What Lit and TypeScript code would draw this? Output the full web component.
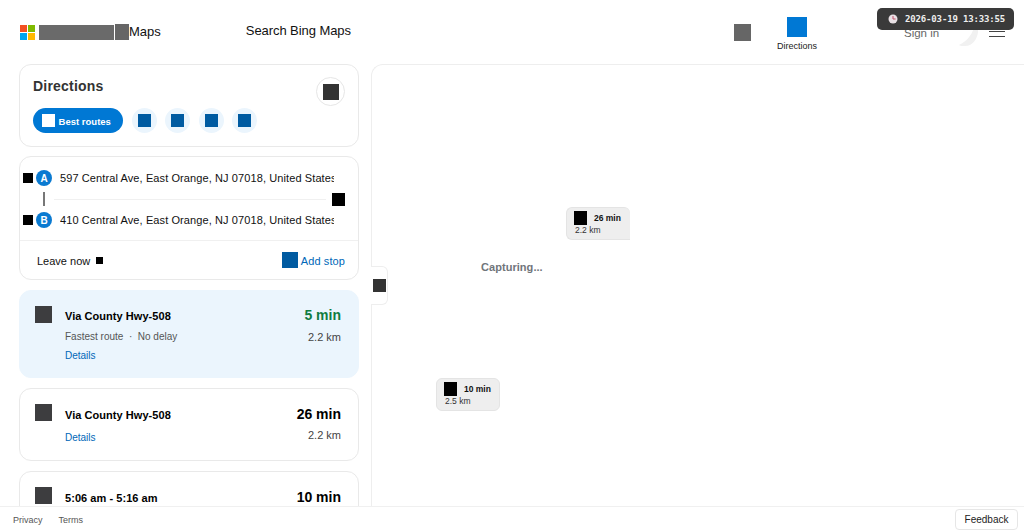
import { LitElement, html, css } from "lit";
import { customElement } from "lit/decorators.js";

@customElement("app-root")
export class AppRoot extends LitElement {
  static styles = css`
    :host { display: block; width: 1024px; height: 532px; position: relative; overflow: hidden; background: #fff; font-family: "Liberation Sans", Arial, sans-serif; color: #111; }
    * { box-sizing: border-box; }
    .page { display: grid; grid-template-rows: 64px 1fr 26px; height: 532px; }
    header { display: flex; align-items: flex-start; position: relative; }
    .logo { display: flex; align-items: center; margin: 24px 0 0 20px; }
    .ms { display: grid; grid-template-columns: 7px 7px; grid-auto-rows: 7px; gap: 1px; margin: 0 4px 0 0; }
    .ms i:nth-child(1) { background: #f25022; } .ms i:nth-child(2) { background: #7fba00; }
    .ms i:nth-child(3) { background: #00a4ef; } .ms i:nth-child(4) { background: #ffb900; }
    .bing { width: 75px; height: 15px; background: #6a6a6a; }
    .bing2 { width: 14px; height: 16px; background: #666; margin-left: 1px; }
    .mapsword { font-size: 13px; line-height: 16px; }
    .search { font-size: 13px; line-height: 16px; margin: 23px 0 0 85px; letter-spacing: -.07px; }
    .hright { margin-left: auto; display: flex; align-items: flex-start; }
    .hgrey { width: 17px; height: 17px; background: #666; margin: 24px 0 0 0; }
    .dirbtn { display: flex; flex-direction: column; align-items: center; margin: 17px 0 0 16px; font-size: 9px; line-height: 11px; color: #222; width: 60px; }
    .dirbtn i { width: 20px; height: 20px; background: #0078d4; margin-bottom: 4px; }
    .signin { font-size: 11.5px; line-height: 14px; color: #666; margin: 26px 0 0 77px; width: 34px; white-space: nowrap; }
    .swoosh { margin: 28px 0 0 21px; }
    .burger { width: 16px; margin: 26px 19px 0 11px; display: flex; flex-direction: column; gap: 4px; }
    .burger i { height: 1px; background: #444; }
    .stamp { position: absolute; left: 877px; top: 8px; width: 137px; height: 22px; background: #3a3a3a; border-radius: 5px; display: flex; align-items: center; gap: 7px; padding-left: 11px; color: #eee; font: bold 9px "DejaVu Sans Mono", monospace; letter-spacing: -.15px; }
    main { display: grid; grid-template-columns: 371px 1fr; min-height: 0; }
    aside { padding-left: 19px; width: 371px; overflow: hidden; display: flex; flex-direction: column; }
    .card { width: 340px; border: 1px solid #e9e9e9; border-radius: 12px; flex: none; }
    .dir { height: 83px; padding: 13px 13px; position: relative; margin-bottom: 9px; }
    .dir h2 { margin: 0; font-size: 14px; line-height: 16px; color: #333; letter-spacing: .2px; }
    .chips { display: flex; gap: 8.6px; margin-top: 14px; }
    .chip0 { display: flex; align-items: center; width: 90.4px; height: 25px; border-radius: 13px; background: #0078d4; color: #fff; font-size: 9.5px; font-weight: bold; padding-left: 9px; gap: 4px; margin-left: -.4px; }
    .chip0 i { width: 13px; height: 13px; background: #fff; }
    .chip0 span { margin-top: 1px; }
    .chip { width: 25px; height: 25px; border-radius: 50%; background: #ebf5fd; display: flex; align-items: center; justify-content: center; }
    .chip i { width: 13px; height: 13px; background: #005ba1; }
    .close { position: absolute; right: 13px; top: 12px; width: 29px; height: 29px; border-radius: 50%; border: 1px solid #e6e6e6; display: flex; align-items: center; justify-content: center; }
    .close i { width: 16px; height: 16px; background: #333; }
    .addr { height: 124px; margin-bottom: 10px; display: flex; flex-direction: column; }
    .stops { height: 84px; border-bottom: 1px solid #f0f0f0; position: relative; padding: 12px 0 0 3px; }
    .stop { display: flex; align-items: center; height: 18px; }
    .stop b.sq { width: 10px; height: 10px; background: #000; }
    .pin { width: 16px; height: 16px; border-radius: 50%; background: #0a7ad1; color: #fff; font-size: 10px; font-weight: bold; display: flex; align-items: center; justify-content: center; margin: 0 8px 0 3px; }
    .stop span { font-size: 11px; letter-spacing: .1px; width: 274px; overflow: hidden; white-space: nowrap; color: #111; }
    .mid { display: flex; align-items: center; height: 24px; margin: 0; }
    .vline { width: 1.5px; height: 14px; background: #777; margin-left: 20px; }
    .hline { width: 272px; height: 1px; background: #f0f0f0; margin-left: 9.5px; }
    .mid b { width: 13px; height: 13px; background: #000; margin-left: 6px; }
    .leave { display: flex; align-items: center; flex: 1; padding: 1px 13px 0 17px; font-size: 11px; }
    .leave b { width: 7px; height: 7px; background: #000; margin-left: 6px; margin-top: -1px; }
    .add { margin-left: auto; display: flex; align-items: center; color: #0067b8; gap: 3px; letter-spacing: .1px; }
    .add i { width: 16px; height: 16px; background: #005ba1; margin-top: -2px; }
    .route { position: relative; padding: 15px 17px 0 45px; margin-bottom: 10px; }
    .route.sel { background: #ebf5fd; border-color: #ebf5fd; height: 88px; }
    .route.two { height: 73px; padding-top: 16px; }
    .route.three { height: 60px; padding-top: 16px; }
    .ric { position: absolute; left: 15px; top: 15px; width: 17px; height: 17px; background: #3d3d3f; }
    .line1 { display: flex; justify-content: space-between; align-items: center; height: 18px; font-size: 11px; font-weight: bold; color: #000; }
    .line1 span:first-child { padding-top: 2px; letter-spacing: .05px; }
    .time { font-size: 14px; }
    .time.g { color: #107c41; }
    .sub { display: flex; justify-content: space-between; margin-top: 6px; font-size: 10px; line-height: 14px; color: #555; }
    .two .sub { margin-top: 5px; }
    .km { font-size: 11px; color: #444; }
    .link { font-size: 10px; line-height: 12px; color: #0067b8; display: block; }
    .sel .link { margin-top: 6px; }
    .two .link { margin-top: 4px; }
    .map { border-left: 1px solid #eee; border-top: 1px solid #eee; border-top-left-radius: 12px; position: relative; }
    .toggle { position: absolute; left: -1px; top: 201px; width: 17px; height: 39px; background: #fff; border: 1px solid #eee; border-left: none; border-radius: 0 6px 6px 0; display: flex; align-items: center; }
    .toggle i { width: 13px; height: 13px; background: #333; margin-left: 2px; }
    .capt { position: absolute; left: 109px; top: 196px; font-size: 11px; letter-spacing: .05px; font-weight: bold; color: #70757a; }
    .tip { position: absolute; width: 64px; height: 33px; background: #eeeeee; border: 1px solid #e4e4e4; border-right: none; border-radius: 6px 6px 0 6px; padding: 3px 7px 3px 8px; font-size: 8.5px; color: #333; line-height: 9px; }
    .tip.full { border-right: 1px solid #e4e4e4; border-radius: 6px; }
    .tip div { display: flex; align-items: center; gap: 7px; font-weight: bold; color: #111; height: 14px; margin: 0 0 1px -1px; }
    .tip b { width: 13px; height: 14px; background: #000; }
    footer { border-top: 1px solid #f0f0f0; background: #fff; display: flex; align-items: center; padding-left: 13px; font-size: 9px; color: #555; gap: 16px; position: relative; z-index: 1; }
    .fb { margin-left: auto; margin-right: 6px; width: 63px; height: 21px; border: 1px solid #e6e6e6; border-radius: 4px; font-size: 10px; color: #222; display: flex; align-items: center; justify-content: center; }
  `;

  render() {
    return html`<div class="page">
      <header>
        <div class="logo"><div class="ms"><i></i><i></i><i></i><i></i></div><div class="bing"></div><div class="bing2"></div><span class="mapsword">Maps</span></div>
        <div class="search">Search Bing Maps</div>
        <div class="hright">
          <div class="hgrey"></div>
          <div class="dirbtn"><i></i>Directions</div>
          <div class="signin">Sign in</div>
          <svg class="swoosh" width="19" height="18" viewBox="0 0 19 18"><path d="M0 17C8 13 12 8 15 0h4c1 8-4 18-13 18C3 18 1 18 0 17z" fill="#f1f1f1"/></svg>
          <div class="burger"><i></i><i></i><i></i></div>
        </div>
        <div class="stamp"><svg width="10" height="10" viewBox="0 0 10 10"><circle cx="5" cy="5" r="4.5" fill="#e8e0e4"/><path d="M5 2v3h2.6" stroke="#c0506a" fill="none"/></svg><span>2026-03-19 13:33:55</span></div>
      </header>
      <main>
        <aside>
          <section class="card dir">
            <h2>Directions</h2>
            <div class="chips"><div class="chip0"><i></i><span>Best routes</span></div><div class="chip"><i></i></div><div class="chip"><i></i></div><div class="chip"><i></i></div><div class="chip"><i></i></div></div>
            <div class="close"><i></i></div>
          </section>
          <section class="card addr">
            <div class="stops">
              <div class="stop"><b class="sq"></b><div class="pin">A</div><span>597 Central Ave, East Orange, NJ 07018, United States</span></div>
              <div class="mid"><div class="vline"></div><div class="hline"></div><b></b></div>
              <div class="stop"><b class="sq"></b><div class="pin">B</div><span>410 Central Ave, East Orange, NJ 07018, United States</span></div>
            </div>
            <div class="leave">Leave now<b></b><div class="add"><i></i>Add stop</div></div>
          </section>
          <section class="card route sel">
            <div class="ric"></div>
            <div class="line1"><span>Via County Hwy-508</span><span class="time g">5 min</span></div>
            <div class="sub"><span>Fastest route &nbsp;·&nbsp; No delay</span><span class="km">2.2 km</span></div>
            <a class="link">Details</a>
          </section>
          <section class="card route two">
            <div class="ric"></div>
            <div class="line1"><span>Via County Hwy-508</span><span class="time">26 min</span></div>
            <div class="sub"><a class="link">Details</a><span class="km">2.2 km</span></div>
          </section>
          <section class="card route three">
            <div class="ric"></div>
            <div class="line1"><span>5:06 am - 5:16 am</span><span class="time">10 min</span></div>
          </section>
        </aside>
        <div class="map">
          <div class="toggle"><i></i></div>
          <div class="capt">Capturing...</div>
          <div class="tip" style="left:194px;top:142px"><div><b></b>26 min</div>2.2 km</div>
          <div class="tip full" style="left:64px;top:313px"><div><b></b>10 min</div>2.5 km</div>
        </div>
      </main>
      <footer><span>Privacy</span><span>Terms</span><div class="fb">Feedback</div></footer>
    </div>`;
  }
}
